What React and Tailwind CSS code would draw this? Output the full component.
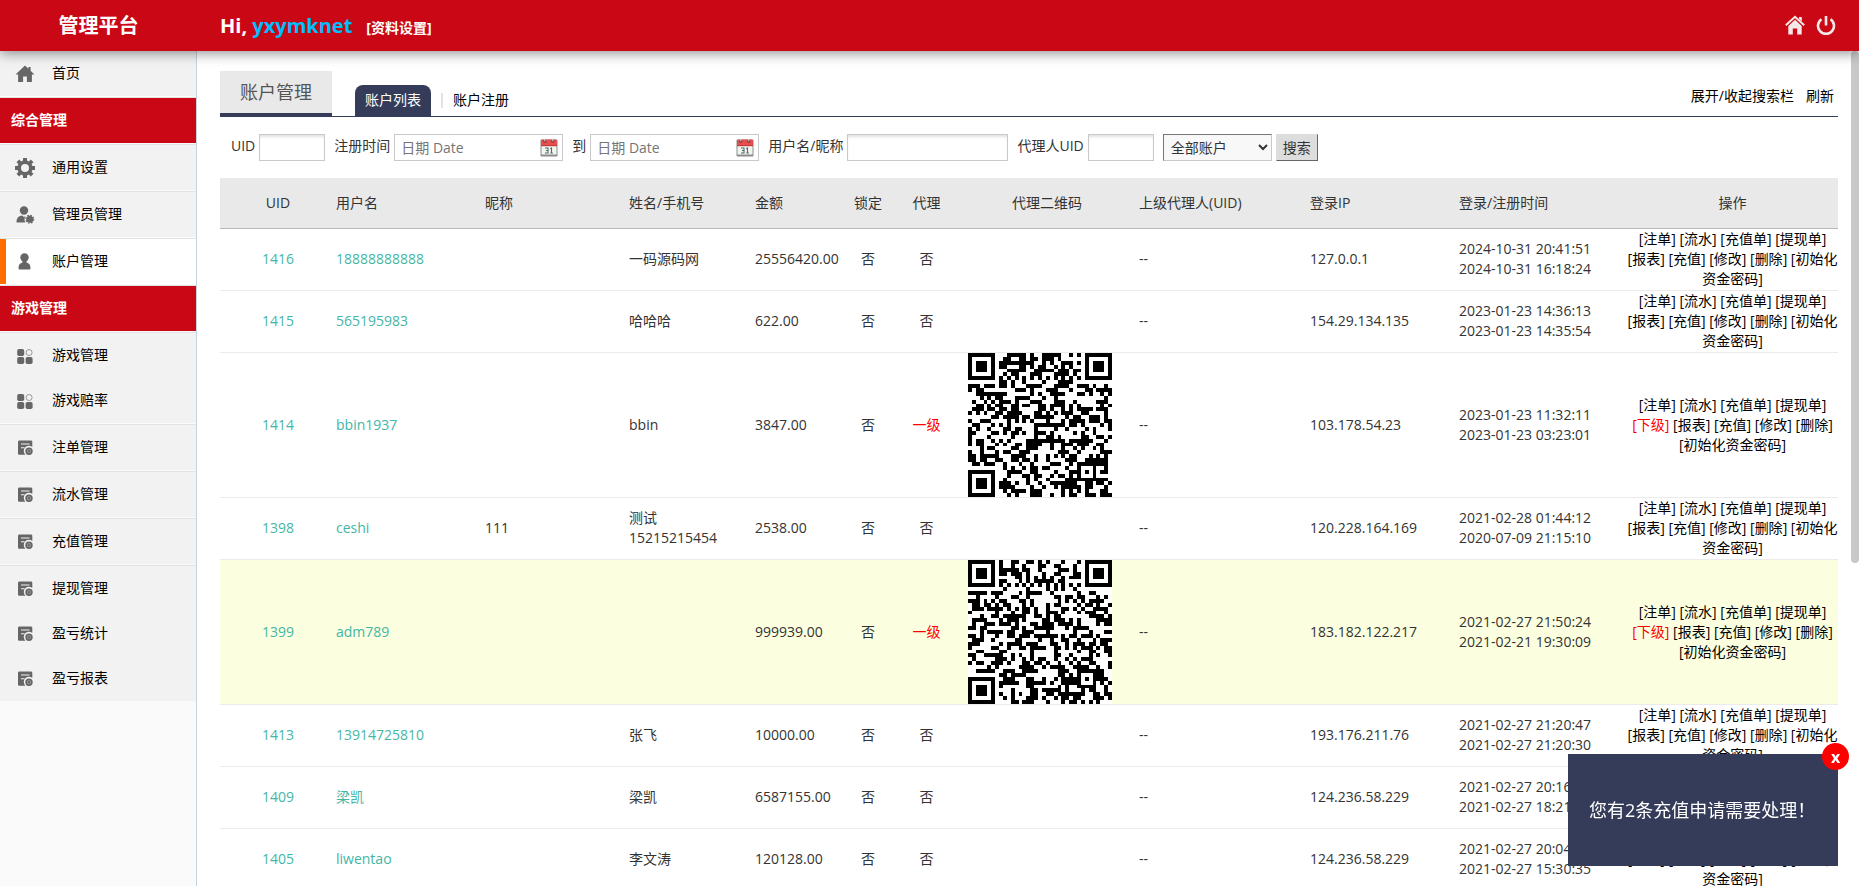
import React from "react";

const ICONS = {
  home: (
    <path d="M10 1.5 0.5 10.5h2.6V18h5v-5.5h3.8V18h5v-7.5h2.6L15.6 6.8V3h-2.2v1.7z" />
  ),
  gear: (
    <path
      fillRule="evenodd"
      d="M8 0h4v2.6l1.9.8L15.8 1.5l2.7 2.7-1.9 1.9.8 1.9H20v4h-2.6l-.8 1.9 1.9 1.9-2.7 2.7-1.9-1.9-1.9.8V20H8v-2.6l-1.9-.8-1.9 1.9-2.7-2.7 1.9-1.9-.8-1.900H0V8h2.600l.8-1.900-1.900-1.900 2.700-2.700 1.900 1.900L8 2.600zM10 6a4 4 0 1 0 0 8 4 4 0 0 0 0-8z"
    />
  ),
  admin: (
    <>
      <circle cx="9" cy="5.5" r="4.2" />
      <path d="M1.5 17.5c0-4.5 2-6.5 5.5-7l2 1.5 1.8-.9c-1.6 2-1.7 4.5-.4 6.4z" />
      <circle cx="14.8" cy="14.2" r="3.5" />
      <circle cx="14.8" cy="14.2" r="3.9" fill="none" stroke="#666" strokeWidth="1.2" strokeDasharray="1.7 1.36" />
    </>
  ),
  user: (
    <>
      <circle cx="9.5" cy="5.5" r="4.2" />
      <path d="M7.5 8.5h4v2c2.7.6 4 2.5 4 5.5 0 1-.5 1.500-1.500 1.500H5c-1 0-1.500-.5-1.500-1.500 0-3 1.300-4.900 4-5.500z" />
    </>
  ),
  grid: (
    <>
      <rect x="2.2" y="3" width="7" height="7" rx="1.8" />
      <rect x="2.2" y="11" width="7" height="7" rx="1.8" />
      <rect x="10.6" y="11" width="7" height="7" rx="1.8" />
      <circle cx="14.1" cy="6.500" r="3" fill="none" stroke="#999" strokeWidth="1" />
    </>
  ),
  list: (
    <>
      <path
        fillRule="evenodd"
        d="M4.5 2.5h11.3c1 0 1.500.5 1.500 1.500v5a5 5 0 0 0-6.800 7.700H4.500c-1 0-1.500-.5-1.500-1.500V4c0-1 .5-1.500 1.500-1.500zM6 5.500v.9h8.500v-.9zM6 9.300v.9h3.500v-.9z"
      />
      <circle cx="14" cy="13.200" r="2.800" fill="#aaa" stroke="#666" strokeWidth="1.800" />
      <circle cx="14" cy="13.200" r="1.200" />
    </>
  ),
};

function MenuIcon({ name }) {
  return (
    <svg viewBox="0 0 20 20" className="size-5 shrink-0 fill-[#666]" aria-hidden="true">
      {ICONS[name]}
    </svg>
  );
}

const MENU = [
  { items: [["首页", "home"]] },
  { title: "综合管理" },
  { items: [["通用设置", "gear"]] },
  { items: [["管理员管理", "admin"]] },
  { items: [["账户管理", "user"]], active: true },
  { title: "游戏管理" },
  { items: [["游戏管理", "grid"], ["游戏赔率", "grid"]] },
  { items: [["注单管理", "list"]] },
  { items: [["流水管理", "list"]] },
  { items: [["充值管理", "list"]] },
  { items: [["提现管理", "list"], ["盈亏统计", "list"], ["盈亏报表", "list"]] },
];

function Sidebar() {
  return (
    <nav className="w-[197px] shrink-0 overflow-hidden border-r border-[#c5d3de] bg-[#fafafa]">
      {MENU.map((group, i) => (
        <div key={i} className={i === 0 ? "border-b border-b-white" : "border-y border-t-[#e3e3e3] border-b-[#fafafa]"}>
          {group.title ? (
            <h2 className="flex h-[45px] items-center bg-[#ca0815] pb-0.5 pl-[11px] text-sm font-bold text-white">
              {group.title}
            </h2>
          ) : (
            group.items.map(([label, icon]) => (
              <a
                key={label}
                href="#"
                className={
                  group.active
                    ? "flex h-[45px] items-center gap-[17px] border-l-6 border-[#ff6c00] bg-white pl-[9px] text-sm text-black"
                    : "flex h-[45px] items-center gap-[17px] bg-[#f2f2f2] pl-[15px] text-sm text-black"
                }
              >
                <MenuIcon name={icon} />
                <span className="pb-0.5">{label}</span>
              </a>
            ))
          )}
        </div>
      ))}
    </nav>
  );
}

const QR_SIZE = 37;

function finderCell(x, y) {
  if (x < 0 || y < 0 || x > 6 || y > 6) return false;
  const d = Math.max(Math.abs(x - 3), Math.abs(y - 3));
  return d !== 2;
}

function qrPath(seed) {
  let state = seed;
  let d = "";
  for (let y = 0; y < QR_SIZE; y++) {
    for (let x = 0; x < QR_SIZE; x++) {
      state = (Math.imul(state, 1664525) + 1013904223) >>> 0;
      const far = QR_SIZE - 8;
      let dark;
      if (x < 8 && y < 8) dark = finderCell(x, y);
      else if (x >= far && y < 8) dark = finderCell(x - far - 1, y);
      else if (x < 8 && y >= far) dark = finderCell(x, y - far - 1);
      else if (Math.abs(x - 30) <= 2 && Math.abs(y - 30) <= 2)
        dark = Math.max(Math.abs(x - 30), Math.abs(y - 30)) !== 1;
      else if (y === 6) dark = x % 2 === 0;
      else if (x === 6) dark = y % 2 === 0;
      else dark = (state >>> 16) & 1;
      if (dark) d += `M${x} ${y}h1v1h-1z`;
    }
  }
  return d;
}

function QrCode({ uid }) {
  return (
    <svg viewBox="0 0 37 37" role="img" aria-label="代理二维码" className="size-36 bg-white" shapeRendering="crispEdges">
      <path d={qrPath(uid)} />
    </svg>
  );
}

const ROWS = [
  { uid: 1416, user: "18888888888", nick: "", name: ["一码源码网"], money: "25556420.00", ip: "127.0.0.1", time: ["2024-10-31 20:41:51", "2024-10-31 16:18:24"] },
  { uid: 1415, user: "565195983", nick: "", name: ["哈哈哈"], money: "622.00", ip: "154.29.134.135", time: ["2023-01-23 14:36:13", "2023-01-23 14:35:54"] },
  { uid: 1414, user: "bbin1937", nick: "", name: ["bbin"], money: "3847.00", agent: true, ip: "103.178.54.23", time: ["2023-01-23 11:32:11", "2023-01-23 03:23:01"] },
  { uid: 1398, user: "ceshi", nick: "111", name: ["测试", "15215215454"], money: "2538.00", ip: "120.228.164.169", time: ["2021-02-28 01:44:12", "2020-07-09 21:15:10"] },
  { uid: 1399, user: "adm789", nick: "", name: [], money: "999939.00", agent: true, hover: true, ip: "183.182.122.217", time: ["2021-02-27 21:50:24", "2021-02-21 19:30:09"] },
  { uid: 1413, user: "13914725810", nick: "", name: ["张飞"], money: "10000.00", ip: "193.176.211.76", time: ["2021-02-27 21:20:47", "2021-02-27 21:20:30"] },
  { uid: 1409, user: "梁凯", nick: "", name: ["梁凯"], money: "6587155.00", ip: "124.236.58.229", time: ["2021-02-27 20:16:42", "2021-02-27 18:21:15"] },
  { uid: 1405, user: "liwentao", nick: "", name: ["李文涛"], money: "120128.00", ip: "124.236.58.229", time: ["2021-02-27 20:04:18", "2021-02-27 15:30:35"] },
];

function Op({ children, red }) {
  return (
    <a href="#" className={red ? "text-[#f00]" : "text-black"}>
      [{children}]
    </a>
  );
}

function Operations({ agent }) {
  return (
    <>
      <Op>注单</Op> <Op>流水</Op> <Op>充值单</Op> <Op>提现单</Op>
      <br />
      {agent && <><Op red>下级</Op>{" "}</>}
      <Op>报表</Op> <Op>充值</Op> <Op>修改</Op> <Op>删除</Op>
      {agent ? <br /> : " "}
      <Op>初始化{!agent && <br />}资金密码</Op>
    </>
  );
}

function AccountTable() {
  return (
    <table className="w-full table-fixed text-left">
      <colgroup>
        <col className="w-[116px]" />
        <col className="w-[149px]" />
        <col className="w-[144px]" />
        <col className="w-[126px]" />
        <col className="w-[96px]" />
        <col className="w-[34px]" />
        <col className="w-[83px]" />
        <col className="w-[158px]" />
        <col className="w-[184px]" />
        <col className="w-[149px]" />
        <col className="w-[168px]" />
        <col className="w-[211px]" />
      </colgroup>
      <thead>
        <tr className="h-[50px] border-b border-[#b8b8b8] bg-[#e9e9e9] *:font-normal *:whitespace-nowrap">
          <th className="text-center">UID</th>
          <th>用户名</th>
          <th>昵称</th>
          <th>姓名/手机号</th>
          <th>金额</th>
          <th className="text-center">锁定</th>
          <th className="text-center">代理</th>
          <th className="text-center">代理二维码</th>
          <th className="pl-[13px]">上级代理人(UID)</th>
          <th>登录IP</th>
          <th>登录/注册时间</th>
          <th className="text-center">操作</th>
        </tr>
      </thead>
      <tbody>
        {ROWS.map((r) => (
          <tr
            key={r.uid}
            className={
              r.hover
                ? "h-[62px] border-b border-[#ebebeb] bg-[#fbffe0]"
                : "h-[62px] border-b border-[#ebebeb]"
            }
          >
            <td className="text-center"><a href="#" className="text-[#44b6a6]">{r.uid}</a></td>
            <td><a href="#" className="text-[#44b6a6]">{r.user}</a></td>
            <td>{r.nick}</td>
            <td>{r.name.map((n) => <div key={n}>{n}</div>)}</td>
            <td>{r.money}</td>
            <td className="text-center">否</td>
            <td className={r.agent ? "text-center text-[#f00]" : "text-center"}>{r.agent ? "一级" : "否"}</td>
            <td>{r.agent && <QrCode uid={r.uid} />}</td>
            <td className="pl-[13px]">--</td>
            <td>{r.ip}</td>
            <td>{r.time.map((t) => <div key={t}>{t}</div>)}</td>
            <td className="text-center whitespace-nowrap"><Operations agent={r.agent} /></td>
          </tr>
        ))}
      </tbody>
    </table>
  );
}

function CalendarIcon() {
  return (
    <svg viewBox="0 0 18 19" className="h-[19px] w-[18px] shrink-0" aria-hidden="true">
      <rect x="0.5" y="1.5" width="17" height="17" rx="1" fill="#8c8c8c" />
      <rect x="1.5" y="8" width="15" height="8.5" fill="#f4f4ee" />
      <path d="M1 3q0-1.500 1.500-1.500h13Q17 1.500 17 3v5H1z" fill="#e45050" />
      <path d="M1 7h16v1.200H1z" fill="#c33c3c" />
      <circle cx="4.8" cy="3.3" r="1.5" fill="#8e2f2f" />
      <circle cx="12.8" cy="3.3" r="1.5" fill="#8e2f2f" />
      <path d="M4.300 0.500h1v3h-1zM12.300 0.500h1v3h-1z" fill="#ddd" />
      <path d="M5 10h3v5H5M6 12.500h2M11.500 15v-5l-1.200.8M10.300 15h2.600" fill="none" stroke="#4d6d70" strokeWidth="1.1" />
    </svg>
  );
}

const INPUT = "h-[27px] border border-[#c9c9c9] bg-white px-1 shadow-[inset_0_3px_3px_-1px_#e2e2e2] outline-none";

function DateInput({ id, label }) {
  return (
    <div className="flex items-center gap-1">
      <label htmlFor={id} className="-mt-1">{label}</label>
      <div className="flex h-[27px] w-[169px] items-center border border-[#c9c9c9] bg-white pr-1 pl-1.5">
        <input id={id} placeholder="日期 Date" className="min-w-0 flex-1 outline-none placeholder:text-[#757575]" />
        <CalendarIcon />
      </div>
    </div>
  );
}

function SearchBar() {
  return (
    <form className="mt-[17px] mb-[17px] flex items-center gap-[9px] pl-[11px]">
      <div className="flex items-center gap-1">
        <label htmlFor="uid" className="-mt-1">UID</label>
        <input id="uid" className={`${INPUT} w-[66px]`} />
      </div>
      <DateInput id="from" label="注册时间" />
      <DateInput id="to" label="到" />
      <div className="flex items-center gap-1">
        <label htmlFor="name" className="-mt-1">用户名/昵称</label>
        <input id="name" className={`${INPUT} w-[161px]`} />
      </div>
      <div className="flex items-center gap-1">
        <label htmlFor="agent" className="-mt-1">代理人UID</label>
        <input id="agent" className={`${INPUT} w-[66px]`} />
      </div>
      <div className="flex items-center gap-1">
        <select
          aria-label="账户类型"
          className="h-[27px] w-[109px] border border-t-[#767676] border-r-[#c9c9c9] border-b-[#c9c9c9] border-l-[#767676] bg-[#f8f8f8] pl-[3px]"
        >
          <option>全部账户</option>
        </select>
        <button type="button" className="h-[27px] w-[42px] border border-t-[#ddd] border-r-[#666] border-b-[#666] border-l-[#ddd] bg-[#ddd]">
          搜索
        </button>
      </div>
    </form>
  );
}

function Header() {
  return (
    <header className="z-10 flex h-[51px] shrink-0 items-center bg-[#ca0815] text-white shadow-[0_2px_12px_rgba(0,0,0,0.45)]">
      <h1 className="w-[197px] text-center text-xl font-bold">管理平台</h1>
      <div className="flex flex-1 items-baseline gap-3.5 pl-[23px] text-xl font-bold">
        <span>
          Hi, <span className="text-[#00bfff]">yxymknet</span>
        </span>
        <a href="#" className="text-sm">[资料设置]</a>
      </div>
      <div className="flex items-center gap-[11px] pr-[23px] pb-0.5">
        <a href="#" aria-label="首页">
          <svg viewBox="0 0 20 20" className="size-5" fill="none" stroke="#f4e9e9">
            <path d="M0.800 10.300 10 1.800l9.200 8.500" strokeWidth="2" />
            <path d="M3.300 11 10 4.800l6.700 6.200v8.500h-4.500v-6H7.800v6H3.300z" fill="#f4e9e9" stroke="none" />
            <path d="M14 2h2.800v4.500L14 4z" fill="#f4e9e9" stroke="none" />
          </svg>
        </a>
        <a href="#" aria-label="退出">
          <svg viewBox="0 0 20 20" className="size-5" fill="none" stroke="#f4e9e9" strokeWidth="2.6">
            <path d="M10 1v9.500M5.500 4.300a8 8 0 1 0 9 0" />
          </svg>
        </a>
      </div>
    </header>
  );
}

function Notice() {
  return (
    <aside className="fixed right-[21px] bottom-5 z-20 flex h-28 w-[270px] items-center bg-[#343c59] pl-[21px] text-lg whitespace-nowrap text-white">
      您有2条充值申请需要处理！
      <button
        type="button"
        aria-label="关闭"
        className="absolute -top-[11px] -right-[11px] flex size-[27px] items-center justify-center rounded-full bg-[#f00] text-base font-bold"
      >
        x
      </button>
    </aside>
  );
}

export default function App() {
  return (
    <div className="flex h-screen flex-col overflow-hidden bg-white font-['Open_Sans','Noto_Sans_CJK_SC',sans-serif] text-sm/5 text-[#333]">
      <Header />
      <div className="flex min-h-0 flex-1">
        <Sidebar />
        <main className="min-w-0 flex-1 overflow-hidden pt-5 pr-[13px] pl-[23px]">
          <div className="flex items-end border-b border-[#343c59]">
            <h2 className="-mb-px flex h-[46px] w-28 items-center justify-center border-b-4 border-[#343c59] bg-[#e9e9e9] text-lg text-[#555]">
              账户管理
            </h2>
            <div className="ml-[23px] flex items-center">
              <a href="#" className="flex h-[31px] items-center rounded-t-lg bg-[#343c59] px-2.5 pb-0.5 text-white">账户列表</a>
              <span className="mr-2.5 ml-2.5 h-[15px] w-0.5 bg-[#e0e3e8]" />
              <a href="#" className="pb-0.5 text-black">账户注册</a>
            </div>
            <div className="mb-2.5 ml-auto flex gap-3 pr-1 text-black">
              <a href="#">展开/收起搜索栏</a>
              <a href="#">刷新</a>
            </div>
          </div>
          <SearchBar />
          <AccountTable />
        </main>
        <div className="w-2 shrink-0">
          <div className="h-[512px] rounded-full bg-[#c8c8c8]" />
        </div>
      </div>
      <Notice />
    </div>
  );
}
